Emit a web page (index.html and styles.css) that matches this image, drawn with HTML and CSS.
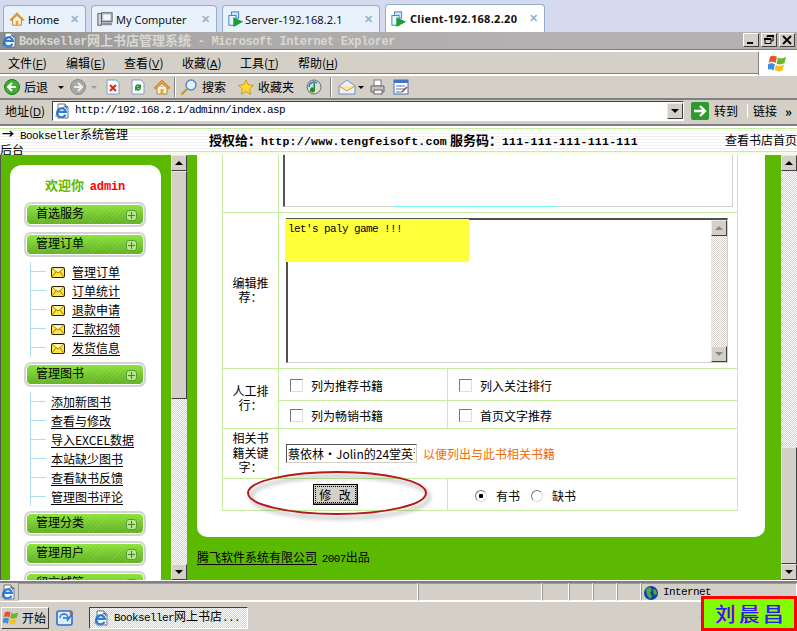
FILE: index.html
```html
<!DOCTYPE html>
<html lang="zh">
<head>
<meta charset="utf-8">
<title>Bookseller网上书店管理系统</title>
<link rel="stylesheet" href="styles.css">
</head>
<body>
<svg class="defs" width="0" height="0" aria-hidden="true">
  <symbol id="ie" viewBox="0 0 16 16">
    <path d="M13 12a5.500 5.500 0 1 1 .5-3.500H4.500" fill="none" stroke="#2a7fd8" stroke-width="2.600"/>
    <path d="M1.500 14.500C0 12 6 4 12 2c2.500-.8 3 1 2 3" fill="none" stroke="#1b5fb8" stroke-width="1"/>
  </symbol>
  <symbol id="page" viewBox="0 0 16 16">
    <path d="M3 1h7l3 3v11H3z" fill="#fff" stroke="#707070"/>
    <path d="M10 1v3h3" fill="#d8d8d8" stroke="#707070"/>
  </symbol>
  <symbol id="house" viewBox="0 0 18 18">
    <path d="M4 9v7h10V9" fill="#fdf2cc" stroke="#a88a40"/>
    <path d="M1 10 9 2l8 8-2 .5L9 5l-6 5.500z" fill="#f2a22e" stroke="#b86f10" stroke-width=".7"/>
    <rect x="7.500" y="11" width="3" height="5" fill="#e9a040"/>
  </symbol>
  <symbol id="play" viewBox="0 0 18 18">
    <rect x="4" y="1" width="8" height="7" fill="#cfe4f8" stroke="#2f7fc8"/>
    <rect x="1" y="5" width="8" height="11" fill="#eaf3fc" stroke="#2f7fc8"/>
    <path d="M6 7l11 5-11 6z" fill="#17a02f"/>
  </symbol>
  <symbol id="env" viewBox="0 0 14 11">
    <rect x=".5" y=".5" width="13" height="10" rx="1" fill="#ffe545" stroke="#2a2000"/>
    <path d="M1 1l6 5 6-5M1 10l4-5M13 10 9 5" fill="none" stroke="#a07a00"/>
    <path d="M2 1.500h10L7 5z" fill="#fffbd0"/>
  </symbol>
  <symbol id="plus" viewBox="0 0 11 11">
    <rect x=".5" y=".5" width="10" height="10" rx="2.500" fill="#b7e888" stroke="#5f9a3c"/>
    <path d="M5.500 2v7M2 5.500h7" stroke="#4f7f35" stroke-width="1.100"/>
  </symbol>
  <symbol id="flag" viewBox="0 0 20 18">
    <path d="M2 3c3-2 5-1 7 0l-1.500 6c-2-1-4-2-7 0z" fill="#e8532b"/>
    <path d="M10 3.500c3 1.500 5 1 8-.5l-1.500 6c-3 1.500-5 2-8 .5z" fill="#6bb52a"/>
    <path d="M0 10.500c3-2 5-1 7 0L5.500 16.500c-2-1-4-2-7 0z" fill="#3f8fe0"/>
    <path d="M8 11c3 1.500 5 1 8-.5l-1.500 6c-3 1.500-5 1-8-.5z" fill="#f5c21b"/>
  </symbol>
</svg>

<div class="tabs">
  <div class="tab tab-home"><svg class="i16"><use href="#house"/></svg><span class="tab-name">Home</span><span class="tab-x">✕</span></div>
  <div class="tab tab-comp">
    <svg class="i16" viewBox="0 0 18 18"><rect x="5" y="2" width="12" height="10" fill="#b9c4cf" stroke="#505860"/><rect x="7" y="4" width="8" height="6" fill="#f5f8fb"/><rect x="1" y="3" width="4" height="13" fill="#d0d4d8" stroke="#505860"/><rect x="6" y="13" width="11" height="3" fill="#8a9096"/></svg>
    <span class="tab-name">My Computer</span><span class="tab-x">✕</span></div>
  <div class="tab tab-srv"><svg class="i16"><use href="#play"/></svg><span class="tab-name">Server-192.168.2.1</span><span class="tab-x">✕</span></div>
  <div class="tab tab-cli active"><svg class="i16"><use href="#play"/></svg><span class="tab-name">Client-192.168.2.20</span><span class="tab-x">✕</span></div>
</div>

<div class="titlebar">
  <span class="stack"><svg class="i16"><use href="#page"/></svg><svg class="stack-ie"><use href="#ie"/></svg></span>
  <span class="title-text"><span class="title-lat">Bookseller</span>网上书店管理系统<span class="title-lat"> - Microsoft Internet Explorer</span></span>
  <div class="winbtns">
    <span class="winbtn">
      <svg width="10" height="10" viewBox="0 0 10 10"><rect x="1" y="7" width="6" height="2"/></svg>
    </span>
    <span class="winbtn">
      <svg width="10" height="10" viewBox="0 0 10 10"><path d="M3 2.500V1h6v5H7.500M1 3.500h6v5H1z" fill="none" stroke="#000"/><path d="M3 0h7v2H3zM0 3h7v2H0z"/></svg>
    </span>
    <span class="winbtn">
      <svg width="10" height="10" viewBox="0 0 10 10"><path d="M1 1l8 8M9 1 1 9" stroke="#000" stroke-width="1.800"/></svg>
    </span>
  </div>
</div>

<div class="menubar">
  <span class="menu-item">文件(<u>F</u>)</span>
  <span class="menu-item">编辑(<u>E</u>)</span>
  <span class="menu-item">查看(<u>V</u>)</span>
  <span class="menu-item">收藏(<u>A</u>)</span>
  <span class="menu-item">工具(<u>T</u>)</span>
  <span class="menu-item">帮助(<u>H</u>)</span>
  <span class="flagbox"><svg class="flag"><use href="#flag"/></svg></span>
</div>

<div class="toolbar">
  <svg class="i16 t-back" viewBox="0 0 16 16"><circle cx="8" cy="8" r="7.500" fill="#3fae32" stroke="#1c7a1c"/><path d="M12 8H5M8 4 4 8l4 4" fill="none" stroke="#fff" stroke-width="2"/></svg>
  <span class="t-label">后退</span>
  <span class="t-caret"></span>
  <svg class="i16 t-fwd" viewBox="0 0 16 16"><circle cx="8" cy="8" r="7.500" fill="#a8a8a4" stroke="#8a8a86"/><path d="M4 8h7M8 4l4 4-4 4" fill="none" stroke="#eee" stroke-width="2"/></svg>
  <span class="t-caret t-caret-off"></span>
  <svg class="i16 t-stop" viewBox="0 0 16 16"><path d="M2 1h9l3 3v11H2z" fill="#fff" stroke="#7f9fc0"/><path d="M5 6l6 6M11 6l-6 6" stroke="#d8261c" stroke-width="2"/></svg>
  <svg class="i16 t-ref" viewBox="0 0 16 16"><path d="M2 1h9l3 3v11H2z" fill="#fff" stroke="#7f9fc0"/><path d="M5 8a3 3 0 0 1 5-2l1-1v4H7l1.500-1.500A1.500 1.500 0 0 0 6.500 8zM11 9a3 3 0 0 1-5 2l-1 1V8h4l-1.500 1.500A1.500 1.500 0 0 0 9.500 9z" fill="#1f9a2c"/></svg>
  <svg class="i18 t-home"><use href="#house"/></svg>
  <span class="t-sep"></span>
  <svg class="i18 t-search" viewBox="0 0 18 18"><circle cx="11" cy="7" r="5" fill="#dff0ff" stroke="#5f88c0" stroke-width="1.500"/><path d="M7 11 1.500 16.500" stroke="#c49a4a" stroke-width="2.400"/></svg>
  <span class="t-label">搜索</span>
  <svg class="i16 t-star" viewBox="0 0 18 18"><path d="M9 1l2.500 5.500 6 .7-4.500 4 1.300 6L9 14.200 3.700 17.200 5 11.200l-4.500-4 6-.7z" fill="#fbd92f" stroke="#c69a1a"/></svg>
  <span class="t-label">收藏夹</span>
  <svg class="i16 t-media" viewBox="0 0 16 16"><circle cx="8" cy="8" r="7" fill="#d8dcd4" stroke="#6a7068"/><path d="M9 4v7a2.500 2.500 0 1 1-1.500-2.300V4z" fill="#2a8a2a"/><path d="M3 8a5 5 0 0 1 8-4" fill="none" stroke="#2f7fc8" stroke-width="1.500"/></svg>
  <span class="t-sep t-sep2"></span>
  <svg class="i18 t-mail" viewBox="0 0 18 18"><path d="M1 8l8-6 8 6v8H1z" fill="#eaf1fb" stroke="#6f8fc4"/><path d="M1 8l8 5 8-5" fill="#f7e6a8" stroke="#d8a040"/></svg>
  <span class="t-caret t-caret-mail"></span>
  <svg class="i16 t-print" viewBox="0 0 16 16"><rect x="4" y="1" width="7" height="6" fill="#fff" stroke="#777"/><path d="M1 7h13v6H1z" fill="#c4c4c0" stroke="#666"/><rect x="4" y="11" width="8" height="4" fill="#f4f4f4" stroke="#666"/></svg>
  <svg class="i16 t-edit" viewBox="0 0 16 16"><rect x="1" y="1" width="14" height="14" fill="#fff" stroke="#4a70b0"/><rect x="1" y="1" width="14" height="3" fill="#3f75c8"/><path d="M3 7h9M3 10h9M3 13h6" stroke="#3a78c0"/><path d="M9 13l5-5" stroke="#c83020" stroke-width="1.500"/></svg>
</div>

<div class="addressbar">
  <span class="addr-label">地址(<u>D</u>)</span>
  <div class="addr-input">
    <span class="stack addr-ico"><svg class="i16"><use href="#page"/></svg><svg class="stack-ie"><use href="#ie"/></svg></span>
    <span class="lat addr-url">http://192.168.2.1/adminn/index.asp</span>
    <span class="sb-btn addr-drop"><i class="tri-down"></i></span>
  </div>
  <svg class="go-ico" viewBox="0 0 18 18"><rect width="18" height="18" rx="2" fill="#2c9a2c"/><path d="M3 9h11M9 4l5 5-5 5" fill="none" stroke="#fff" stroke-width="2.400"/></svg>
  <span class="go-label">转到</span>
  <span class="links">链接</span>
  <span class="links-more">»</span>
</div>

<div class="pagehead">
  <div class="ph-left"><span class="ph-arrow">→</span><span class="lat">Bookseller</span>系统管理<br>后台</div>
  <div class="ph-mid"><b>授权给：<span class="lat">http://www.tengfeisoft.com</span> 服务码：<span class="lat">111-111-111-111-111</span></b></div>
  <a class="ph-right">查看书店首页</a>
</div>

<div class="frames">
  <div class="frame-left">
    <div class="side">
      <div class="welcome"><b class="welcome-g">欢迎你</b> <b class="lat welcome-r">admin</b></div>
      <div class="mh">首选服务<svg class="plus"><use href="#plus"/></svg></div>
      <div class="mh">管理订单<svg class="plus"><use href="#plus"/></svg></div>
      <ul class="sub">
        <li><svg class="env"><use href="#env"/></svg><a>管理订单</a></li>
        <li><svg class="env"><use href="#env"/></svg><a>订单统计</a></li>
        <li><svg class="env"><use href="#env"/></svg><a>退款申请</a></li>
        <li><svg class="env"><use href="#env"/></svg><a>汇款招领</a></li>
        <li><svg class="env"><use href="#env"/></svg><a>发货信息</a></li>
      </ul>
      <div class="mh">管理图书<svg class="plus"><use href="#plus"/></svg></div>
      <ul class="sub">
        <li><a>添加新图书</a></li>
        <li><a>查看与修改</a></li>
        <li><a>导入EXCEL数据</a></li>
        <li><a>本站缺少图书</a></li>
        <li><a>查看缺书反馈</a></li>
        <li><a>管理图书评论</a></li>
      </ul>
      <div class="mh">管理分类<svg class="plus"><use href="#plus"/></svg></div>
      <div class="mh">管理用户<svg class="plus"><use href="#plus"/></svg></div>
      <div class="mh">留言城管<svg class="plus"><use href="#plus"/></svg></div>
    </div>
  </div>
  <div class="scroll scroll-left">
    <span class="sb-btn"><i class="tri-up"></i></span>
    <span class="sb-thumb sb-thumb-left"></span>
    <span class="sb-track"></span>
    <span class="sb-btn"><i class="tri-down"></i></span>
  </div>
  <div class="frame-main">
    <div class="panel">
      <table class="form">
        <colgroup><col class="c1"><col class="c2"><col class="c3"></colgroup>
        <tr class="r1">
          <td></td>
          <td colspan="2" class="clip-cell"><div class="ta-top"><span class="cyan"></span></div></td>
        </tr>
        <tr class="r2">
          <th>编辑推荐：</th>
          <td colspan="2" class="ta-cell">
            <div class="ta">
              <span class="yellow"></span>
              <span class="lat ta-text">let's paly game !!!</span>
              <div class="scroll ta-sb">
                <span class="sb-btn"><i class="tri-up tri-off"></i></span>
                <span class="sb-track"></span>
                <span class="sb-btn"><i class="tri-down tri-off"></i></span>
              </div>
            </div>
          </td>
        </tr>
        <tr class="r3">
          <th rowspan="2">人工排行：</th>
          <td><label class="opt"><input type="checkbox" class="cb">列为推荐书籍</label></td>
          <td><label class="opt"><input type="checkbox" class="cb">列入关注排行</label></td>
        </tr>
        <tr class="r4">
          <td><label class="opt"><input type="checkbox" class="cb">列为畅销书籍</label></td>
          <td><label class="opt"><input type="checkbox" class="cb">首页文字推荐</label></td>
        </tr>
        <tr class="r5">
          <th>相关书籍关键字：</th>
          <td colspan="2"><input class="kw" type="text" value="蔡依林·Jolin的24堂英语课" readonly><span class="hint">以便列出与此书相关书籍</span></td>
        </tr>
        <tr class="r6">
          <td colspan="2" class="btn-cell"><button class="btn" type="button"><span class="btn-in">修 改</span></button></td>
          <td class="rad-cell"><label class="rad"><input type="radio" name="s" class="rb" checked>有书</label><label class="rad"><input type="radio" name="s" class="rb">缺书</label></td>
        </tr>
      </table>
    </div>
    <div class="foot"><a>腾飞软件系统有限公司</a> <span class="lat foot-year">2007</span>出品</div>
    <svg class="ring" width="190" height="56" viewBox="0 0 190 56">
      <ellipse cx="92" cy="24" rx="89" ry="21" fill="none" stroke="#b41a1a" stroke-width="2"/>
    </svg>
  </div>
  <div class="scroll scroll-right">
    <span class="sb-btn"><i class="tri-up"></i></span>
    <span class="sb-track sb-track-right"></span>
    <span class="sb-thumb"></span>
    <span class="sb-btn"><i class="tri-down"></i></span>
  </div>
</div>

<div class="statusbar">
  <span class="st st-ie"><span class="stack"><svg class="i16"><use href="#page"/></svg><svg class="stack-ie"><use href="#ie"/></svg></span></span>
  <span class="st st-grow"></span>
  <span class="st st-a"></span>
  <span class="st st-b"></span>
  <span class="st st-c"></span>
  <span class="st st-d"></span>
  <span class="st st-e"></span>
  <span class="st st-net">
    <svg class="i16" viewBox="0 0 16 16"><circle cx="8" cy="8" r="7" fill="#123fae"/><path d="M3 4l4-2 2 3-2 3 2 3-2 3-3-4zM10 4l3 1 1 4-3 1z" fill="#4fae3a"/></svg>
    <span class="lat">Internet</span>
  </span>
</div>

<div class="taskbar">
  <button class="start" type="button"><svg class="flag-s"><use href="#flag"/></svg>开始</button>
  <svg class="ql" viewBox="0 0 18 18"><rect x="1" y="2" width="15" height="14" rx="2" fill="#d8ecfb" stroke="#2f6fc8" stroke-width="1.600"/><path d="M4 9a4 4 0 0 1 8 0H7M11 12l5-7" fill="none" stroke="#1f6fd0" stroke-width="1.400"/><circle cx="15" cy="4" r="1.500" fill="#e05020"/></svg>
  <div class="task"><span class="stack task-ico"><svg class="i16"><use href="#page"/></svg><svg class="stack-ie"><use href="#ie"/></svg></span><span class="task-text"><span class="lat">Bookseller</span>网上书店<span class="lat">...</span></span></div>
  <span class="tray"></span>
</div>

<div class="sign"><span class="sign-text">刘晨昌</span></div>
</body>
</html>
```

FILE: styles.css
```css
* { box-sizing: border-box; }
html, body { margin: 0; padding: 0; }
body {
  width: 797px; height: 631px; overflow: hidden; position: relative;
  display: flex; flex-direction: column;
  font: 12px/1.2 "Noto Sans CJK SC", "Liberation Sans", sans-serif;
  color: #000; background: #d4d0c8;
}
.defs { position: absolute; }
a { color: #000; text-decoration: underline; text-underline-offset: 2px; }
.lat { font-family: "Liberation Mono", "Noto Sans CJK SC", monospace; font-size: 11px; letter-spacing: -.6px; }
.i16 { width: 16px; height: 16px; flex: none; display: block; }
.i18 { width: 18px; height: 18px; flex: none; }
.stack { position: relative; width: 16px; height: 16px; flex: none; display: block; }
.stack-ie { position: absolute; left: 0; top: 2px; width: 13px; height: 13px; }

/* remote-desktop tabs */
.tabs { height: 32px; flex: none; background: #d5daee; display: flex; align-items: flex-end; padding-left: 3px; gap: 5px; }
.tab {
  height: 27px; display: flex; align-items: center; padding: 0 5px;
  background: #e9f1fb; border: 1px solid #93aecb; border-bottom: 0; border-radius: 4px 4px 0 0;
  font: 12px "Liberation Sans", sans-serif; color: #111;
}
.tab-home { width: 83px; } .tab-comp { width: 126px; } .tab-srv { width: 158px; } .tab-cli { width: 160px; }
.tab.active { background: #fff; font-weight: 700; height: 28px; }
.tab-name { margin-left: 3px; flex: 1; white-space: nowrap; font-family: "Noto Sans", sans-serif; font-size: 11px; line-height: 1; }
.tab-srv .tab-name { letter-spacing: .1px; margin-left: 1px; }
.active .tab-name { margin-left: 3px; letter-spacing: .3px; }
.tab-x { color: #9ab4cc; font-size: 11px; font-weight: 700; margin-right: 1px; }

/* IE chrome */
.titlebar {
  height: 20px; flex: none; display: flex; align-items: center; padding: 0 2px 2px 2px; gap: 1px;
  background: linear-gradient(90deg, #8f8e8e, #a9a7a7 20%, #b4b2b2 70%, #b3b1b1);
  border-bottom: 2px solid #fff; box-shadow: inset 0 -1px 0 #808080;
}
.title-text { margin-left: 0; color: #d8d8d0; font-weight: 700; font-size: 13px; font-family: "Noto Sans CJK SC", sans-serif; white-space: nowrap; line-height: 1; }
.title-lat { font-family: "Liberation Mono", monospace; font-size: 12px; letter-spacing: -.4px; white-space: pre; }
.winbtns { margin-left: auto; display: flex; gap: 2px; }
.winbtn {
  width: 16px; height: 14px; background: #d4d0c8; display: flex; align-items: center; justify-content: center;
  border: 1px solid; border-color: #fff #404040 #404040 #fff;
}
.menubar { height: 24px; flex: none; display: flex; align-items: center; padding: 1px 0 0 8px; border-bottom: 2px solid #fff; box-shadow: inset 0 -1px 0 #808080; }
.menu-item { width: 58px; white-space: nowrap; }
.menu-item u { font-family: "Liberation Sans", sans-serif; font-size: 11px; }
.flagbox { margin-left: auto; width: 39px; height: 23px; margin-top: -1px; background: #fff; display: flex; align-items: center; justify-content: center; border-left: 1px solid #808080; }
.flag { width: 20px; height: 18px; }

.toolbar { height: 24px; flex: none; display: flex; align-items: center; padding-left: 4px; border-bottom: 2px solid #808080; }
.t-label { margin-left: 4px; white-space: nowrap; }
.t-caret { width: 0; height: 0; margin-left: 10px; border: 3px solid transparent; border-top: 3px solid #000; border-bottom: 0; }
.t-caret-off { border-top-color: #999; margin-left: 5px; }
.t-caret-mail { margin-left: 2px; }
.t-fwd { margin-left: 6px; }
.t-stop { margin-left: 8px; }
.t-ref { margin-left: 9px; }
.t-home { margin-left: 7px; }
.t-sep { width: 2px; height: 20px; margin: 0 3px; background: #808080; border-right: 1px solid #fff; }
.t-search { margin-left: 1px; }
.t-star { margin-left: 12px; }
.t-media { margin-left: 12px; }
.t-sep2 { margin: 0 6px 0 8px; }
.t-print { margin-left: 6px; }
.t-edit { margin-left: 7px; }

.addressbar { height: 25px; flex: none; display: flex; align-items: center; padding: 0 0 2px 5px; border-bottom: 1px solid #808080; }
.addr-label { width: 47px; white-space: nowrap; }
.addr-label u { font: 11px "Liberation Sans", sans-serif; }
.addr-input {
  width: 632px; height: 20px; display: flex; align-items: center; background: #fff; padding-left: 2px;
  border: 1px solid; border-color: #404040 #fff #fff #404040;
}
.addr-ico { margin-right: 4px; }
.addr-url { flex: 1; }
.addr-drop { height: 16px; }
.go-ico { width: 18px; height: 18px; margin-left: 7px; flex: none; }
.go-label { margin-left: 5px; width: 26px; white-space: nowrap; }
.links { margin-left: 7px; padding-left: 5px; border-left: 1px solid #fff; white-space: nowrap; }
.links-more { margin-left: 8px; font-size: 13px; font-weight: 700; line-height: 1; }

/* page header */
.pagehead {
  height: 30px; flex: none; display: grid; grid-template-columns: 135px 1fr auto; align-items: center;
  border-bottom: 3px solid #f7fce9;
  box-shadow: inset 0 -1px 0 #c6ee9f;
  background:
    linear-gradient(#808080 0 1px, #fff 1px 3px, #c6ee9f 3px 4px, transparent 4px) top / 100% 4px no-repeat,
    repeating-linear-gradient(#fff 0 2px, #f0f0f0 2px 3px);
}
.ph-left { align-self: start; line-height: 13px; padding-top: 2px; white-space: nowrap; }
.ph-arrow { font-weight: 700; margin: 0 6px 0 2px; }
.ph-mid { white-space: nowrap; font-size: 13px; padding-left: 74px; }
.ph-mid .lat { font-size: 11.500px; letter-spacing: .25px; font-weight: 700; }
.ph-right { text-decoration: none; white-space: nowrap; }

/* frames */
.frames { height: 425px; flex: none; display: flex; overflow: hidden; position: relative; }
.frame-left { width: 171px; flex: none; background: #5ab900; border-left: 1px solid #555; padding: 10px 10px 0 9px; overflow: hidden; }
.side { background: #fff; height: 500px; border-radius: 12px 12px 0 0; padding: 0 14px; }
.welcome { height: 37px; padding: 13px 0 0 21px; white-space: nowrap; line-height: 14px; }
.welcome-g { color: #5ab900; font-weight: 700; font-size: 13px; }
.welcome-r { color: #f00; font-weight: 700; font-size: 12px; letter-spacing: -.1px; margin-left: 3px; }

.mh {
  position: relative; width: 122px; height: 25px; margin-bottom: 5px; padding-left: 10px; line-height: 18px;
  border: 2px solid #d4d4d4; border-radius: 7px; outline: 1px solid #fff; outline-offset: -3px;
  background: repeating-linear-gradient(135deg, rgba(255,255,255,.09) 0 1px, transparent 1px 3px), linear-gradient(#8ee63a, #72c52c 55%, #5fae22);
  background-clip: padding-box;
}
.plus { position: absolute; right: 7px; top: 6px; width: 11px; height: 11px; }
.sub { list-style: none; margin: 1px 0 5px 6px; padding: 0; border-left: 1px solid #aedcf0; }
.sub li { height: 19px; display: flex; align-items: center; padding: 1px 0 0 20px; position: relative; white-space: nowrap; }
.sub li::before { content: ""; position: absolute; left: 0; top: 9px; width: 15px; height: 1px; background: #aedcf0; }
.env { width: 14px; height: 11px; margin-right: 7px; flex: none; }

/* scrollbars */
.scroll { width: 16px; flex: none; display: flex; flex-direction: column; background: #d4d0c8; }
.sb-btn {
  width: 16px; height: 16px; flex: none; display: flex; align-items: center; justify-content: center; background: #d4d0c8;
  border: 1px solid; border-color: #eeeae2 #404040 #404040 #eeeae2;
}
.tri-up, .tri-down { width: 0; height: 0; border: 4px solid transparent; }
.tri-up { border-bottom-color: #000; border-top: 0; }
.tri-down { border-top-color: #000; border-bottom: 0; }
.tri-off.tri-up { border-bottom-color: #8a8780; }
.tri-off.tri-down { border-top-color: #8a8780; }
.sb-track { flex: 1; background: repeating-conic-gradient(#d4d0c8 0 25%, #fff 0 50%) 0 0 / 2px 2px; }
.sb-thumb { height: 117px; flex: none; background: #d4d0c8; border: 1px solid; border-color: #eeeae2 #404040 #404040 #eeeae2; }
.sb-thumb-left { height: 228px; }

/* main frame */
.frame-main { flex: 1; background: #5ab900; position: relative; overflow: hidden; padding-left: 10px; }
.panel { width: 568px; height: 382px; background: #fff; border-radius: 0 0 10px 10px; padding-left: 25px; }
.form { width: 515px; table-layout: fixed; border-collapse: collapse; }
.c1 { width: 56px; } .c2 { width: 169px; } .c3 { width: 290px; }
.form td, .form th { border: 1px solid #c6ee9f; padding: 0; font-weight: 400; vertical-align: middle; }
.form th { text-align: center; padding: 0 4px; line-height: 14.500px; }
.r1 td { height: 57px; border-top: 0; vertical-align: top; }
.r2 td, .r2 th { height: 156px; }
.r3 td { height: 32px; }
.r4 td { height: 28px; }
.r5 td, .r5 th { height: 50px; }
.r6 td { height: 32px; }
.ta-top { position: relative; margin: 0 4px; height: 52px; border: 1px solid; border-color: transparent #d0d0d0 #d0d0d0 #555; border-left-width: 2px; border-top: 0; }
.cyan { position: absolute; left: 109px; right: 174px; bottom: -1px; height: 1px; background: #7cf5f0; }
.form .ta-cell { padding: 5px 9px 5px 7px; }
.ta { position: relative; height: 145px; border: 1px solid; border-color: #505050 #d4d0c8 #d4d0c8 #505050; border-width: 2px 1px 1px 2px; background: #fff; padding: 0; }
.yellow { position: absolute; left: -3px; top: -1px; width: 184px; height: 43px; background: #ffff3a; }
.ta-text { position: relative; line-height: 14px; }
.ta-sb { position: absolute; right: 0; top: 0; bottom: 0; }

.opt { display: flex; align-items: center; padding: 4px 0 0 11px; white-space: nowrap; }
.cb { appearance: none; margin: 0 8px 0 0; width: 13px; height: 13px; background: #fff; border: 1px solid; border-color: #777 #ddd #ddd #777; }
.kw {
  width: 131px; height: 19px; margin: 0 6px 0 7px; padding: 0 1px; font: 12px "Noto Sans CJK SC", sans-serif; vertical-align: middle; outline: 0;
  border: 1px solid; border-color: #505050 #d4d0c8 #d4d0c8 #505050;
}
.hint { color: #f36b00; vertical-align: -2px; }
.btn-cell { text-align: center; }
.btn { width: 45px; height: 21px; padding: 1px; background: #d4d0c8; font: 12px "Noto Sans CJK SC", sans-serif; border: 1px solid; border-color: #fff #000 #000 #fff; box-shadow: inset -1px -1px 0 #777; outline: 1px solid #000; outline-offset: -1px; vertical-align: middle; }
.btn-in { display: block; border: 1px dotted #000; line-height: 15px; word-spacing: 5px; }
.form .rad-cell { padding-top: 6px; }
.rad { display: inline-flex; align-items: center; margin-left: 27px; white-space: nowrap; }
.rad + .rad { margin-left: 11px; }
.rb { appearance: none; width: 12px; height: 12px; margin: 0 9px 0 0; border-radius: 50%; background: #fff; border: 1px solid; border-color: #777 #ddd #ddd #777; }
.rb:checked { background: radial-gradient(circle, #000 0 2px, #fff 2.500px); }

.foot { padding-top: 13px; white-space: nowrap; }
.foot-year { margin-left: 2px; }
.ring { position: absolute; left: 58px; top: 314px; filter: drop-shadow(3px 4px 2px rgba(0,0,0,.4)); overflow: visible; }

/* status + taskbar */
.statusbar { height: 22px; flex: none; display: flex; align-items: stretch; border-top: 1px solid #fff; padding-top: 2px; background: #d4d0c8; box-shadow: inset 0 2px 0 #808080; border-bottom: 1px solid #fff; }
.st { border: 1px solid; border-color: #9a9a94 #fff #fff #9a9a94; display: flex; align-items: center; gap: 4px; }
.st-ie { width: 18px; border: 0; padding-left: 1px; }
.st-grow { flex: 1; }
.st-a { width: 124px; } .st-b { width: 27px; } .st-c { width: 24px; } .st-d { width: 24px; } .st-e { width: 24px; }
.st-net { width: 156px; padding: 2px 0 0 1px; }

.taskbar { flex: 1; display: flex; align-items: center; padding-top: 2px; background: #d4d0c8; }
.start { width: 48px; height: 22px; margin-left: 1px; padding: 0 0 0 1px; display: flex; align-items: center; gap: 2px; font: 12px "Noto Sans CJK SC", sans-serif; background: #d4d0c8; border: 1px solid; border-color: #fff #404040 #404040 #fff; }
.flag-s { width: 17px; height: 15px; }
.ql { width: 18px; height: 18px; margin-left: 7px; flex: none; }
.task { width: 159px; height: 22px; margin-left: 15px; display: flex; align-items: center; padding-left: 4px; border: 1px solid; border-color: #404040 #fff #fff #404040; background: repeating-conic-gradient(#d4d0c8 0 25%, #fff 0 50%) 0 0 / 2px 2px; }
.task-ico { margin-right: 4px; }
.task-text { white-space: nowrap; }
.tray { width: 6px; height: 7px; margin-left: auto; margin-right: 92px; background: #c8c4e8; }

.sign {
  position: absolute; left: 701px; top: 596px; width: 96px; height: 35px; border: 3px solid #f00; background: #7fff00;
  display: flex; align-items: center; justify-content: center;
}
.sign-text { font-size: 20px; letter-spacing: 4px; margin-right: -4px; color: #2020f0; text-shadow: 1px 0 0 #f0f; }
```
